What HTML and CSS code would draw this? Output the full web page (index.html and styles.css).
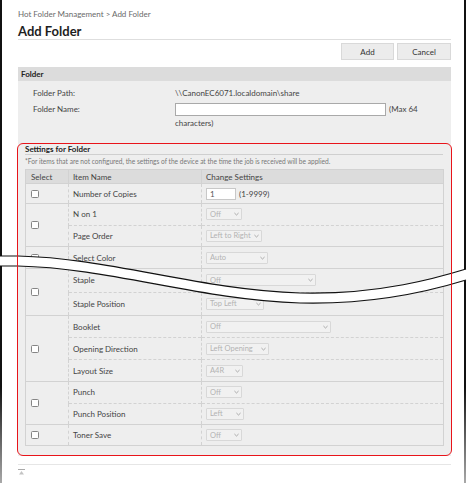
FILE: index.html
```html
<!DOCTYPE html>
<html lang="en">
<head>
<meta charset="utf-8">
<title>Add Folder</title>
<link rel="stylesheet" href="styles.css">
</head>
<body>
<div class="frame">
  <div class="crumb">Hot Folder Management &gt; Add Folder</div>
  <h1 class="title">Add Folder</h1>
  <div class="actions">
    <button class="btn btn-add" type="button">Add</button>
    <button class="btn" type="button">Cancel</button>
  </div>
  <section class="panel">
    <div class="panel-head">Folder</div>
    <div class="folder-body">
      <div class="frow frow-path"><span class="flabel">Folder Path:</span><span class="fval">\\CanonEC6071.localdomain\share</span></div>
      <div class="frow frow-name"><span class="flabel">Folder Name:</span><span class="fval"><span class="text-input"></span>(Max 64 characters)</span></div>
    </div>
    <div class="settings">
      <div class="set-title">Settings for Folder</div>
      <div class="note">*For items that are not configured, the settings of the device at the time the job is received will be applied.</div>
      <table class="grid">
        <colgroup><col class="c1"><col class="c2"><col class="c3"></colgroup>
        <tr class="hrow"><th class="th-sel">Select</th><th>Item Name</th><th>Change Settings</th></tr>
        <tr class="r20"><td class="cbc"><span class="cb"></span></td><td>Number of Copies</td><td><span class="num">1</span><span class="range">(1-9999)</span></td></tr>
        <tr class="r215"><td class="cbc" rowspan="2"><span class="cb"></span></td><td>N on 1</td><td><span class="sel w36">Off<svg class="chev" viewBox="0 0 6 4"><path d="M0.5 0.8 L3 3.2 L5.5 0.8"/></svg></span></td></tr>
        <tr class="r215 sub"><td>Page Order</td><td><span class="sel w56">Left to Right<svg class="chev" viewBox="0 0 6 4"><path d="M0.5 0.8 L3 3.2 L5.5 0.8"/></svg></span></td></tr>
        <tr class="r22"><td class="cbc"><span class="cb"></span></td><td>Select Color</td><td><span class="sel w62">Auto<svg class="chev" viewBox="0 0 6 4"><path d="M0.5 0.8 L3 3.2 L5.5 0.8"/></svg></span></td></tr>
        <tr class="r235"><td class="cbc" rowspan="2"><span class="cb"></span></td><td>Staple</td><td><span class="sel w110">Off<svg class="chev" viewBox="0 0 6 4"><path d="M0.5 0.8 L3 3.2 L5.5 0.8"/></svg></span></td></tr>
        <tr class="r235 sub"><td>Staple Position</td><td><span class="sel w58">Top Left<svg class="chev" viewBox="0 0 6 4"><path d="M0.5 0.8 L3 3.2 L5.5 0.8"/></svg></span></td></tr>
        <tr class="r22"><td class="cbc" rowspan="3"><span class="cb"></span></td><td>Booklet</td><td><span class="sel w125">Off<svg class="chev" viewBox="0 0 6 4"><path d="M0.5 0.8 L3 3.2 L5.5 0.8"/></svg></span></td></tr>
        <tr class="r22 sub"><td>Opening Direction</td><td><span class="sel w63">Left Opening<svg class="chev" viewBox="0 0 6 4"><path d="M0.5 0.8 L3 3.2 L5.5 0.8"/></svg></span></td></tr>
        <tr class="r22 sub"><td>Layout Size</td><td><span class="sel w37">A4R<svg class="chev" viewBox="0 0 6 4"><path d="M0.5 0.8 L3 3.2 L5.5 0.8"/></svg></span></td></tr>
        <tr class="r215"><td class="cbc" rowspan="2"><span class="cb"></span></td><td>Punch</td><td><span class="sel w36">Off<svg class="chev" viewBox="0 0 6 4"><path d="M0.5 0.8 L3 3.2 L5.5 0.8"/></svg></span></td></tr>
        <tr class="r215 sub"><td>Punch Position</td><td><span class="sel w38">Left<svg class="chev" viewBox="0 0 6 4"><path d="M0.5 0.8 L3 3.2 L5.5 0.8"/></svg></span></td></tr>
        <tr class="r21"><td class="cbc"><span class="cb"></span></td><td>Toner Save</td><td><span class="sel w36">Off<svg class="chev" viewBox="0 0 6 4"><path d="M0.5 0.8 L3 3.2 L5.5 0.8"/></svg></span></td></tr>
      </table>
    </div>
  </section>
  <div class="footer">
    <svg class="totop" viewBox="0 0 7 6"><path class="bar" d="M0 0.5 H7"/><path class="tri" d="M1 5.5 L3.5 2 L6 5.5 Z"/></svg>
  </div>
</div>
<svg class="break" viewBox="0 0 468 483" width="468" height="483">
  <path class="band" d="M0 256 L18 256 C110 258 200 290 300 293 C380 295 440 277 468 268.4 L468 279.4 C440 288 380 305 300 303 C200 300 110 268 18 266 L0 266 Z"/>
  <path class="edge" d="M0 256 L18 256 C110 258 200 290 300 293 C380 295 440 277 466 269"/>
  <path class="edge" d="M0 266 L18 266 C110 268 200 300 300 303 C380 305 440 288 466 280"/>
</svg>
</body>
</html>
```

FILE: styles.css
```css
* { box-sizing: border-box; margin: 0; padding: 0; }
html, body { width: 468px; height: 483px; overflow: hidden; background: #fff; }
body {
  position: relative;
  font-family: Lato, "Open Sans", sans-serif;
  font-size: 8px;
  color: #333;
}
.frame {
  width: 466px;
  height: 483px;
  border-style: solid;
  border-width: 0 2px;
  border-image: linear-gradient(to bottom, #111 0%, #111 80%, #aaa 100%) 1;
  padding: 0 13px 0 16px;
}
.crumb { padding-top: 9px; line-height: 10px; color: #6a6a6a; }
.title {
  margin-top: 5px;
  font-size: 13px;
  line-height: 15px;
  font-weight: 700;
  color: #1e1e1e;
  border-bottom: 1px solid #dedede;
}
.actions { display: flex; justify-content: flex-end; gap: 3px; margin-top: 3px; }
.btn {
  width: 54px;
  height: 17px;
  background: #ececec;
  border: 1px solid #d9d9d9;
  font: 8px Lato, "Open Sans", sans-serif;
  color: #333;
}
.btn-add { width: 53px; }
.panel { margin-top: 7px; background: #eeeeee; }
.panel-head {
  height: 14px;
  line-height: 14px;
  padding-left: 3px;
  background: #dcdcdc;
  font-weight: 700;
  color: #222;
}
.folder-body { padding: 6px 0 0 15px; color: #444; }
.frow { display: flex; }
.frow-path { line-height: 12px; }
.frow-name { margin-top: 4px; line-height: 13.5px; }
.flabel { width: 142px; flex: none; }
.fval { flex: 1; padding-right: 62px; }
.frow-name .fval { padding-right: 0; width: 260px; flex: none; }
.text-input {
  display: inline-block;
  width: 211px;
  height: 13px;
  background: #fff;
  border: 1px solid #a9a9a9;
  vertical-align: middle;
  margin-right: 3px;
}
.settings { position: relative; margin-top: 13px; padding: 0 8px 10px 7px; }
.settings::after {
  content: "";
  position: absolute;
  left: -1px; top: 0; right: -1px; bottom: 0;
  border: 1.5px solid #e8141a;
  border-radius: 6px;
  z-index: 3;
}
.set-title {
  padding-top: 1px;
  line-height: 10px;
  font-weight: 700;
  color: #222;
  border-bottom: 1px solid #cfcfcf;
}
.note { margin-top: 2px; line-height: 9px; font-size: 6.6px; color: #777; }
.grid {
  margin-top: 3px;
  width: 418px;
  border-collapse: collapse;
  border: 1px solid #d2d2d2;
  color: #444;
  table-layout: fixed;
}
.c1 { width: 43px; }
.c2 { width: 133px; }
.c3 { width: 242px; }
.grid th {
  height: 14px;
  background: #dcdcdc;
  font-weight: 400;
  text-align: left;
  padding: 0 4px;
  border: 1px solid #d2d2d2;
  color: #444;
}
.grid th.th-sel { padding-left: 5px; }
.grid td {
  padding: 0 4px;
  vertical-align: middle;
  border-top: 1px solid #d2d2d2;
  border-left: 1px dashed #d2d2d2;
  white-space: nowrap;
}
.grid td.cbc { border-left: 1px solid #d2d2d2; padding-left: 5px; }
.grid tr.sub td { border-top: 1px dashed #d2d2d2; }
.r20 { height: 20px; }
.r21 { height: 21px; }
.r215 { height: 21.5px; }
.r22 { height: 22px; }
.r235 { height: 23.5px; }
.cb {
  display: block;
  width: 8px;
  height: 8px;
  border: 1px solid #858585;
  border-radius: 1.5px;
  background: #fff;
}
.num {
  display: inline-block;
  width: 30px;
  height: 12px;
  line-height: 10px;
  padding-left: 3px;
  background: #fff;
  border: 1px solid #c8c8c8;
  vertical-align: middle;
  color: #555;
}
.range { margin-left: 3px; vertical-align: middle; }
.sel {
  display: inline-flex;
  align-items: center;
  justify-content: space-between;
  height: 12px;
  padding: 0 2px 0 3px;
  border: 1px solid #d8d8d8;
  border-radius: 1px;
  background: #f1f1f1;
  color: #b3b3b3;
  font-size: 7.5px;
  vertical-align: middle;
}
.chev { width: 5px; height: 4px; flex: none; }
.chev path { fill: none; stroke: #9a9a9a; stroke-width: 1; }
.w36 { width: 36px; }
.w37 { width: 37px; }
.w38 { width: 38px; }
.w56 { width: 56px; }
.w58 { width: 58px; }
.w62 { width: 62px; }
.w63 { width: 63px; }
.w110 { width: 110px; }
.w125 { width: 125px; }
.footer { margin-top: 8px; border-top: 1px solid #e6e6e6; padding-top: 4px; }
.totop { display: block; width: 7px; height: 6px; }
.totop .bar { stroke: #aaa; stroke-width: 1; }
.totop .tri { fill: #c4c4c4; }
.break { position: absolute; left: 0; top: 0; z-index: 2; pointer-events: none; }
.break .band { fill: #fff; }
.break .edge { fill: none; stroke: #111; stroke-width: 1.2; }
```
